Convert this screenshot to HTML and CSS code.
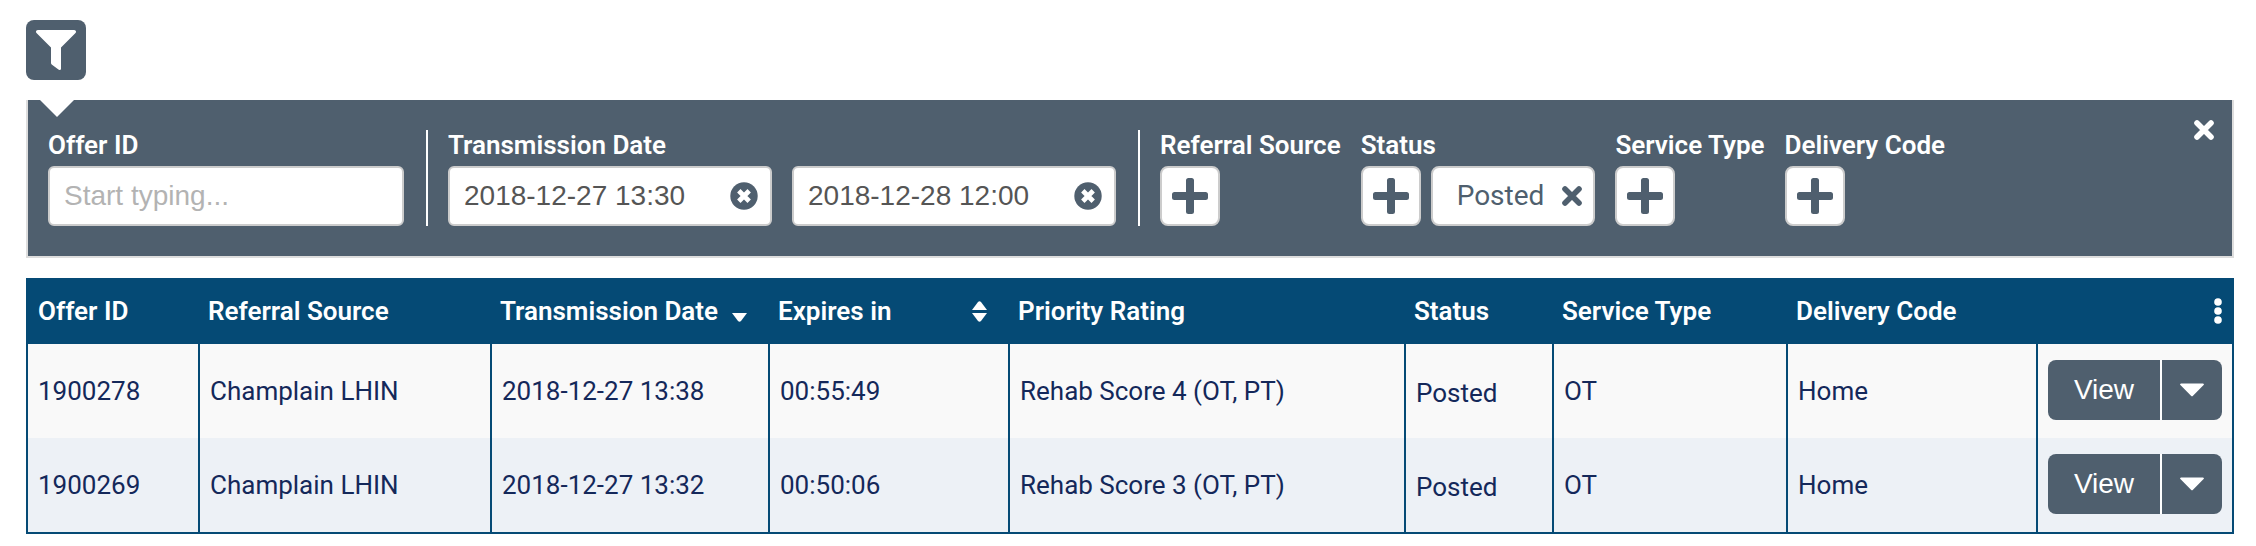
FILE: index.html
```html
<!DOCTYPE html>
<html lang="en">
<head>
  <meta charset="UTF-8" />
  <meta name="viewport" content="width=device-width, initial-scale=1.0" />
  <title>Offers</title>
  <link rel="stylesheet" href="styles.css">
</head>
<body>
  <!-- shared icons -->
  <svg class="icon-defs" width="0" height="0" aria-hidden="true">
    <symbol id="icon-plus" viewBox="0 0 36 36">
      <path d="M16.500 0h3a2.500 2.500 0 0 1 2.500 2.500V14h11.500a2.500 2.500 0 0 1 2.500 2.500v3a2.500 2.500 0 0 1-2.500 2.500H22v11.500a2.500 2.500 0 0 1-2.500 2.500h-3a2.500 2.500 0 0 1-2.500-2.500V22H2.500A2.500 2.500 0 0 1 0 19.500v-3A2.500 2.500 0 0 1 2.500 14H14V2.500A2.500 2.500 0 0 1 16.500 0z" />
    </symbol>
    <symbol id="icon-times" viewBox="0 0 20 20">
      <path d="M3 3l14 14M17 3L3 17" fill="none" stroke="currentColor" stroke-width="5.600" stroke-linecap="round" />
    </symbol>
    <symbol id="icon-times-circle" viewBox="0 0 28 28">
      <circle cx="14" cy="14" r="13.700" />
      <path d="M8.800 8.800l10.400 10.400M19.200 8.800l-10.400 10.400" fill="none" stroke="#fff" stroke-width="4.800" />
    </symbol>
    <symbol id="icon-caret" viewBox="0 0 24 14">
      <path d="M1.200 0.400h21.600a1 1 0 0 1 .8 1.700L13 12.700a1.400 1.400 0 0 1-2 0L.4 2.100a1 1 0 0 1 .8-1.700z" />
    </symbol>
  </svg>

  <button type="button" class="filter-toggle" aria-label="Toggle filters">
    <svg width="40" height="40" viewBox="0 0 40 40"><path d="M1.800 0h36.400c1.600 0 2.400 1.900 1.300 3L25 17.500v20.900c0 1.500-1.500 2-2.600 1.200l-6.700-5A2 2 0 0 1 15 33V17.500L.5 3C-.6 1.900.2 0 1.800 0z" /></svg>
  </button>

  <form class="filters">
    <div class="filter-group offer-group">
      <label class="filter-label" for="offerId">Offer ID</label>
      <input type="text" id="offerId" class="text-input" placeholder="Start typing..." />
    </div>

    <div class="filter-group divided">
      <label class="filter-label" for="dateFrom">Transmission Date</label>
      <div class="date-range">
        <div class="date-field">
          <input type="text" id="dateFrom" class="text-input" value="2018-12-27 13:30" />
          <button type="button" class="clear-button" aria-label="Clear start date"><svg width="28" height="28"><use href="#icon-times-circle" /></svg></button>
        </div>
        <div class="date-field">
          <input type="text" id="dateTo" class="text-input" value="2018-12-28 12:00" aria-label="Transmission date to" />
          <button type="button" class="clear-button" aria-label="Clear end date"><svg width="28" height="28"><use href="#icon-times-circle" /></svg></button>
        </div>
      </div>
    </div>

    <div class="filter-group">
      <span class="filter-label">Referral Source</span>
      <button type="button" class="add-button" aria-label="Add referral source"><svg width="36" height="36"><use href="#icon-plus" /></svg></button>
    </div>

    <div class="filter-group">
      <span class="filter-label">Status</span>
      <div class="tags">
        <button type="button" class="add-button" aria-label="Add status"><svg width="36" height="36"><use href="#icon-plus" /></svg></button>
        <button type="button" class="tag">Posted <svg width="20" height="20"><use href="#icon-times" /></svg></button>
      </div>
    </div>

    <div class="filter-group">
      <span class="filter-label">Service Type</span>
      <button type="button" class="add-button" aria-label="Add service type"><svg width="36" height="36"><use href="#icon-plus" /></svg></button>
    </div>

    <div class="filter-group">
      <span class="filter-label">Delivery Code</span>
      <button type="button" class="add-button" aria-label="Add delivery code"><svg width="36" height="36"><use href="#icon-plus" /></svg></button>
    </div>

    <button type="button" class="close-button" aria-label="Close filters"><svg width="20" height="20"><use href="#icon-times" /></svg></button>
  </form>

  <table class="offers">
    <colgroup>
      <col class="col-id" />
      <col class="col-source" />
      <col class="col-date" />
      <col class="col-expires" />
      <col />
      <col class="col-status" />
      <col class="col-service" />
      <col class="col-delivery" />
      <col class="col-actions" />
    </colgroup>
    <thead>
      <tr>
        <th>Offer ID</th>
        <th>Referral Source</th>
        <th>
          <button type="button" class="sort-button">Transmission Date
            <svg width="15" height="21" viewBox="0 0 15 21"><path d="M0 12h15l-6 8q-1.500 1.500-3 0z" /></svg>
          </button>
        </th>
        <th>
          <button type="button" class="sort-button">Expires in
            <svg width="15" height="21" viewBox="0 0 15 21"><path d="M0 9h15L9 1Q7.500-.500 6 1zM0 12h15l-6 8q-1.500 1.500-3 0z" /></svg>
          </button>
        </th>
        <th>Priority Rating</th>
        <th>Status</th>
        <th>Service Type</th>
        <th>Delivery Code</th>
        <th>
          <button type="button" class="menu-button" aria-label="Table options">
            <svg width="8" height="26" viewBox="0 0 8 26"><circle cx="4" cy="4" r="3.800" /><circle cx="4" cy="13" r="3.800" /><circle cx="4" cy="22" r="3.800" /></svg>
          </button>
        </th>
      </tr>
    </thead>
    <tbody>
      <tr>
        <td>1900278</td>
        <td>Champlain LHIN</td>
        <td>2018-12-27 13:38</td>
        <td>00:55:49</td>
        <td>Rehab Score 4 (OT, PT)</td>
        <td class="status">Posted</td>
        <td>OT</td>
        <td>Home</td>
        <td class="actions">
          <div class="split-button">
            <button type="button" class="view-button">View</button>
            <button type="button" class="caret-button" aria-label="More actions"><svg width="24" height="14"><use href="#icon-caret" /></svg></button>
          </div>
        </td>
      </tr>
      <tr>
        <td>1900269</td>
        <td>Champlain LHIN</td>
        <td>2018-12-27 13:32</td>
        <td>00:50:06</td>
        <td>Rehab Score 3 (OT, PT)</td>
        <td class="status">Posted</td>
        <td>OT</td>
        <td>Home</td>
        <td class="actions">
          <div class="split-button">
            <button type="button" class="view-button">View</button>
            <button type="button" class="caret-button" aria-label="More actions"><svg width="24" height="14"><use href="#icon-caret" /></svg></button>
          </div>
        </td>
      </tr>
    </tbody>
  </table>
</body>
</html>
```

FILE: styles.css
```css
* {
  box-sizing: border-box;
}

body {
  margin: 0;
  padding: 20px 22px 12px 26px;
  background-color: #ffffff;
  font-family: Roboto, sans-serif;
  font-size: 26px;
  line-height: 30px;
}

button {
  margin: 0;
  padding: 0;
  border: none;
  background: none;
  color: inherit;
  font: inherit;
  cursor: pointer;
}

svg {
  display: block;
  fill: currentColor;
}

.icon-defs {
  position: absolute;
}

.filter-toggle {
  display: flex;
  align-items: center;
  justify-content: center;
  width: 60px;
  height: 60px;
  border-radius: 8px;
  background-color: #4f5f6e;
  color: #ffffff;
}

/* Filter panel */
.filters {
  position: relative;
  display: flex;
  gap: 20px;
  margin: 20px 0;
  padding: 30px 20px;
  border: 2px solid #dddddd;
  border-top: none;
  background-color: #4f5f6e;
  color: #ffffff;
}

/* notch under the filter button */
.filters::before {
  content: "";
  position: absolute;
  top: 0;
  left: 12px;
  border: 17px solid transparent;
  border-top-color: #ffffff;
  border-bottom: none;
}

.filter-label {
  display: block;
  margin-bottom: 6px;
  font-weight: 600;
  white-space: nowrap;
}

.offer-group {
  width: 356px;
}

.divided {
  padding: 0 22px 0 20px;
  border-left: 2px solid #ffffff;
  border-right: 2px solid #ffffff;
  margin-left: 2px;
}

.date-range {
  display: flex;
  gap: 20px;
}

.date-field {
  position: relative;
  width: 324px;
}

.text-input {
  display: block;
  width: 100%;
  height: 60px;
  padding: 0 14px;
  border: 2px solid #cccccc;
  border-radius: 6px;
  background-color: #ffffff;
  color: #555555;
  font-family: "Liberation Sans", Arial, sans-serif;
  font-size: 28px;
}

.text-input::placeholder {
  color: #b3b3b3;
}

.clear-button {
  position: absolute;
  top: 16px;
  right: 14px;
  color: #4f5f6e;
}

.tags {
  display: flex;
  gap: 10px;
}

.add-button,
.tag {
  display: flex;
  align-items: center;
  justify-content: center;
  height: 60px;
  border: 2px solid #cccccc;
  border-radius: 8px;
  background-color: #ffffff;
  color: #4f5f6e;
}

.add-button {
  width: 60px;
}

.tag {
  gap: 18px;
  padding: 0 11px 0 24px;
  font-size: 28px;
}

.close-button {
  position: absolute;
  top: 20px;
  right: 18px;
}

/* Offers table */
.offers {
  width: 100%;
  table-layout: fixed;
  border: 2px solid #054a75;
  border-spacing: 0;
  color: #14285a;
}

.col-id {
  width: 170px;
}

.col-source {
  width: 292px;
}

.col-date {
  width: 278px;
}

.col-expires {
  width: 240px;
}

.col-status {
  width: 148px;
}

.col-service {
  width: 234px;
}

.col-delivery {
  width: 250px;
}

.col-actions {
  width: 196px;
}

.offers th {
  padding: 16px 10px 18px;
  background-color: #054a75;
  color: #ffffff;
  font-weight: 600;
  text-align: left;
  white-space: nowrap;
}

.offers td {
  padding: 32px 10px;
  background-color: #f9f9f9;
  vertical-align: top;
}

.offers td + td {
  border-left: 2px solid #054a75;
}

.offers tbody tr:nth-child(even) td {
  background-color: #edf1f6;
}

.offers .status {
  padding: 34px 10px 30px;
}

.offers .actions {
  padding: 16px 10px 18px;
}

.sort-button {
  display: flex;
  align-items: center;
  justify-content: space-between;
  width: 100%;
  padding-right: 11px;
}

.menu-button {
  display: block;
  margin-left: auto;
}

.split-button {
  display: flex;
  height: 60px;
}

.view-button,
.caret-button {
  display: flex;
  align-items: center;
  justify-content: center;
  background-color: #4f5f6e;
  color: #ffffff;
}

.view-button {
  flex: 1;
  border-right: 2px solid #ffffff;
  border-radius: 8px 0 0 8px;
  font-family: "Liberation Sans", Arial, sans-serif;
  font-size: 28px;
}

.caret-button {
  width: 60px;
  border-radius: 0 8px 8px 0;
}
```
